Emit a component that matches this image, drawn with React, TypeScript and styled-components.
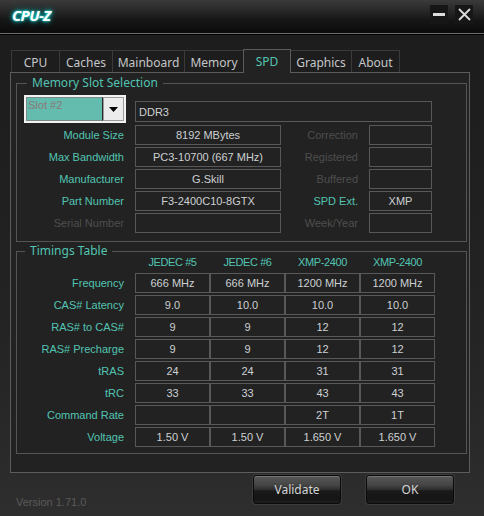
import React from "react";
import styled, { createGlobalStyle } from "styled-components";

const TEAL = "#52c4b2";
const DIM = "#4e4e4e";
const VALUE = "#cdd0d2";
const BOX = "#585858";
const UI = `"Noto Sans", "Open Sans", sans-serif`;
const SANS = `"Liberation Sans", Arial, sans-serif`;

const Global = createGlobalStyle`
  html, body { margin: 0; padding: 0; background: #1e1e1e; }
  #root { width: 484px; height: 516px; }
  * { box-sizing: border-box; }
`;

const Window = styled.div`
  width: 484px;
  height: 516px;
  display: flex;
  flex-direction: column;
  overflow: hidden;
  font-family: ${SANS};
  background: linear-gradient(180deg, #1c1c1c 0%, #202020 40%, #262626 75%, #2e2e2e 100%);
`;

const TitleBar = styled.div`
  flex: none;
  height: 34px;
  display: flex;
  align-items: flex-start;
  padding: 0 11px 0 12px;
  border-bottom: 1px solid #6c6c6c;
  background: linear-gradient(180deg, #3a3a3a 0%, #2c2c2c 25%, #161616 60%, #0b0b0b 100%);
`;

const Title = styled.div`
  flex: 1;
  margin-top: 5px;
  font-family: "Open Sans", "Liberation Sans", sans-serif;
  font-weight: 700;
  font-style: italic;
  font-size: 15px;
  line-height: 20px;
  letter-spacing: -0.6px;
  color: #ffffff;
  text-shadow: 0 0 2px #4ff, 0 0 4px #1cc, 0 0 7px #088;
`;

const WinButtons = styled.div`
  display: flex;
  gap: 7px;
  margin-top: 5px;
`;

const WinBtn = styled.div`
  width: 18px;
  height: 19px;
  background: #161616;
  display: grid;
  place-items: center;
`;

const Body = styled.div`
  flex: none;
  border-top: 1px solid #000;
  padding: 14px 14px 0 10px;
  display: flex;
  flex-direction: column;
`;

const TabRow = styled.div`
  position: relative;
  z-index: 1;
  display: flex;
  align-items: flex-end;
  height: 24px;
  margin: 0 0 -1px 1px;
`;

const Tab = styled.div<{ $w: number; $active?: boolean }>`
  position: relative;
  width: ${(p) => p.$w}px;
  height: ${(p) => (p.$active ? 24 : 22)}px;
  margin-bottom: ${(p) => (p.$active ? 0 : 1)}px;
  margin-left: -1px;
  z-index: ${(p) => (p.$active ? 2 : 1)};
  border: 1px solid ${(p) => (p.$active ? "#5c5c5c" : "#3a3a3a")};
  border-bottom: none;
  background: ${(p) => (p.$active ? "#222222" : "transparent")};
  color: ${(p) => (p.$active ? TEAL : "#c4c6c8")};
  font-family: ${UI};
  font-size: 12px;
  display: flex;
  align-items: center;
  justify-content: center;
  padding-top: ${(p) => (p.$active ? 0 : 1)}px;
  padding-bottom: ${(p) => (p.$active ? 1 : 0)}px;
  &:first-child { margin-left: 0; }
`;

const Panel = styled.div`
  height: 401px;
  border: 1px solid #5c5c5c;
  background: #222222;
  padding: 2px 2px 18px 5px;
  display: flex;
  flex-direction: column;
  gap: 1px;
`;

const Group = styled.fieldset`
  margin: 0;
  min-width: 0;
  border: 1px solid #555555;
  padding: ${(p: { $pad: string }) => p.$pad};
`;

const Legend = styled.legend<{ $ml: number }>`
  margin-left: ${(p) => p.$ml}px;
  padding: 0 5px;
  font-family: ${UI};
  font-size: 12px;
  line-height: 16px;
  color: ${TEAL};
`;

const SlotGrid = styled.div`
  display: grid;
  grid-template-columns: 107px 146px 66px 63px;
  grid-template-rows: 28px repeat(5, 20px);
  column-gap: 11px;
  row-gap: 2px;
`;

const Label = styled.div<{ $dim?: boolean }>`
  display: flex;
  align-items: center;
  justify-content: flex-end;
  font-size: 11px;
  white-space: nowrap;
  color: ${(p) => (p.$dim ? DIM : TEAL)};
`;

const ValueBox = styled.div<{ $left?: boolean }>`
  border: 1px solid ${BOX};
  display: flex;
  align-items: center;
  justify-content: ${(p) => (p.$left ? "flex-start" : "center")};
  padding-left: ${(p) => (p.$left ? 3 : 0)}px;
  font-size: 11px;
  color: ${VALUE};
  white-space: nowrap;
`;

const TypeBox = styled(ValueBox)`
  grid-column: 2 / 5;
  align-self: end;
  height: 21px;
  margin-bottom: 1px;
`;

const SlotSelect = styled.div`
  justify-self: end;
  width: 102px;
  margin-right: -2px;
  height: 28px;
  border: 2px solid #f2f2f2;
  display: flex;
`;

const SlotField = styled.div`
  flex: 1;
  background: #64bcae;
  border: 1px solid #7a8a88;
  border-right: 1px solid #2a2a2a;
  padding: 1px 0 0 1px;
  font-size: 11px;
  line-height: 13px;
  color: #8a7878;
`;

const DropBtn = styled.div`
  width: 21px;
  background: #ececec;
  border: 1px solid #9c9c9c;
  display: grid;
  place-items: center;
`;

const TimingGrid = styled.div`
  display: grid;
  grid-template-columns: 118px repeat(4, 75px);
  grid-template-rows: 15px repeat(8, 20px);
  row-gap: 2px;
  margin-top: -3px;
`;

const TLabel = styled(Label)`
  padding-right: 11px;
`;

const ColHead = styled.div`
  text-align: center;
  font-size: 11px;
  line-height: 12px;
  letter-spacing: -0.4px;
  color: ${TEAL};
`;

const Footer = styled.div`
  flex: 1;
  display: flex;
  align-items: flex-start;
  padding: 2px 30px 0 16px;
`;

const Version = styled.div`
  flex: 1;
  margin-top: 21px;
  font-size: 11px;
  color: #5a5a5a;
`;

const Buttons = styled.div`
  display: flex;
  gap: 25px;
`;

const Button = styled.div`
  width: 88px;
  height: 29px;
  border: 1px solid #0a0a0a;
  border-radius: 3px;
  box-shadow: inset 0 1px 0 rgba(255, 255, 255, 0.18), 0 0 0 1px rgba(90, 90, 90, 0.35);
  background: linear-gradient(180deg, #585858 0%, #434343 35%, #2e2e2e 50%, #1a1a1a 55%, #151515 85%, #1e1e1e 100%);
  display: flex;
  align-items: center;
  justify-content: center;
  font-family: ${UI};
  font-size: 12px;
  color: #d2d4d6;
`;

const tabs: [string, number][] = [
  ["CPU", 49],
  ["Caches", 54],
  ["Mainboard", 73],
  ["Memory", 60],
  ["SPD", 48],
  ["Graphics", 62],
  ["About", 49],
];

const slotRows: { l: string; ld?: boolean; v: string; r: string; rd: boolean; rv: string }[] = [
  { l: "Module Size", v: "8192 MBytes", r: "Correction", rd: true, rv: "" },
  { l: "Max Bandwidth", v: "PC3-10700 (667 MHz)", r: "Registered", rd: true, rv: "" },
  { l: "Manufacturer", v: "G.Skill", r: "Buffered", rd: true, rv: "" },
  { l: "Part Number", v: "F3-2400C10-8GTX", r: "SPD Ext.", rd: false, rv: "XMP" },
  { l: "Serial Number", ld: true, v: "", r: "Week/Year", rd: true, rv: "" },
];

const heads = ["JEDEC #5", "JEDEC #6", "XMP-2400", "XMP-2400"];

const timings: [string, string[]][] = [
  ["Frequency", ["666 MHz", "666 MHz", "1200 MHz", "1200 MHz"]],
  ["CAS# Latency", ["9.0", "10.0", "10.0", "10.0"]],
  ["RAS# to CAS#", ["9", "9", "12", "12"]],
  ["RAS# Precharge", ["9", "9", "12", "12"]],
  ["tRAS", ["24", "24", "31", "31"]],
  ["tRC", ["33", "33", "43", "43"]],
  ["Command Rate", ["", "", "2T", "1T"]],
  ["Voltage", ["1.50 V", "1.50 V", "1.650 V", "1.650 V"]],
];

export default function App() {
  return (
    <>
      <Global />
      <Window>
        <TitleBar>
          <Title>CPU-Z</Title>
          <WinButtons>
            <WinBtn>
              <svg width="12" height="3" viewBox="0 0 12 3">
                <rect x="0" y="0" width="12" height="3" fill="#dcdcdc" />
              </svg>
            </WinBtn>
            <WinBtn>
              <svg width="13" height="13" viewBox="0 0 13 13">
                <path d="M1 1 L12 12 M12 1 L1 12" stroke="#dcdcdc" strokeWidth="1.8" />
              </svg>
            </WinBtn>
          </WinButtons>
        </TitleBar>
        <Body>
          <TabRow>
            {tabs.map(([t, w]) => (
              <Tab key={t} $w={w} $active={t === "SPD"}>
                {t}
              </Tab>
            ))}
          </TabRow>
          <Panel>
            <Group $pad="4px 0 8px 0">
              <Legend $ml={10}>Memory Slot Selection</Legend>
              <SlotGrid>
                <SlotSelect>
                  <SlotField>Slot #2</SlotField>
                  <DropBtn>
                    <svg width="9" height="5" viewBox="0 0 9 5">
                      <path d="M0 0 H9 L4.5 5 Z" fill="#000" />
                    </svg>
                  </DropBtn>
                </SlotSelect>
                <TypeBox $left>DDR3</TypeBox>
                {slotRows.map((r) => (
                  <React.Fragment key={r.l}>
                    <Label $dim={r.ld}>{r.l}</Label>
                    <ValueBox>{r.v}</ValueBox>
                    <Label $dim={r.rd}>{r.r}</Label>
                    <ValueBox>{r.rv}</ValueBox>
                  </React.Fragment>
                ))}
              </SlotGrid>
            </Group>
            <Group $pad="0 0 6px 0">
              <Legend $ml={8}>Timings Table</Legend>
              <TimingGrid>
                <div />
                {heads.map((h, i) => (
                  <ColHead key={i}>{h}</ColHead>
                ))}
                {timings.map(([l, vals]) => (
                  <React.Fragment key={l}>
                    <TLabel>{l}</TLabel>
                    {vals.map((v, i) => (
                      <ValueBox key={i}>{v}</ValueBox>
                    ))}
                  </React.Fragment>
                ))}
              </TimingGrid>
            </Group>
          </Panel>
        </Body>
        <Footer>
          <Version>Version 1.71.0</Version>
          <Buttons>
            <Button>Validate</Button>
            <Button>OK</Button>
          </Buttons>
        </Footer>
      </Window>
    </>
  );
}
